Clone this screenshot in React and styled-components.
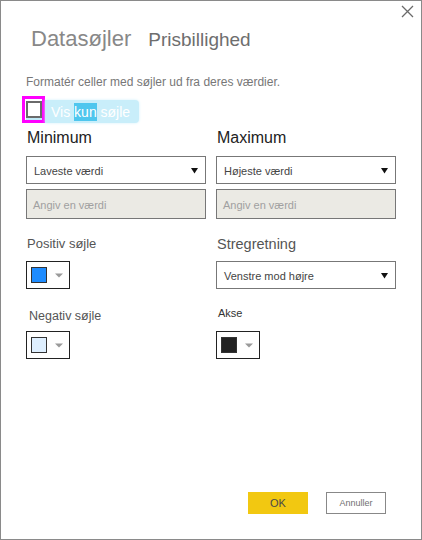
import React from 'react';
import styled, { createGlobalStyle } from 'styled-components';

const GlobalStyle = createGlobalStyle`
    body{
        margin: 0;
        background: #ffffff;
        font-family: "Liberation Sans", Arial, sans-serif;
    }
`

const Dialog = styled.div`
    position: relative;
    width: 422px;
    height: 540px;
    box-sizing: border-box;
    border: 1px solid #8a8a8a;
    padding: 0 25px 25px 25px;
    display: flex;
    flex-direction: column;
    background: #ffffff;
`

const Close = styled.button`
    position: absolute;
    top: 4px;
    right: 7px;
    width: 13px;
    height: 13px;
    padding: 0;
    border: none;
    background: transparent;
    display: flex;
    align-items: center;
    justify-content: center;
`

const Header = styled.div`
    margin-top: 25px;
    display: flex;
    align-items: baseline;
    gap: 17px;
    padding-left: 5px;

    .title{
        font-size: 22px;
        line-height: 26px;
        color: #888888;
    }

    .sub{
        font-size: 19px;
        line-height: 26px;
        color: #6e6e6e;
    }
`

const Intro = styled.p`
    margin: 21px 0 0 0;
    font-size: 12px;
    line-height: 16px;
    color: #777777;
`

const CheckRow = styled.div`
    margin-top: 6px;
    display: flex;
    align-items: flex-end;
    height: 27px;
    margin-left: -4px;
`

const Marker = styled.span`
    width: 23px;
    height: 27px;
    box-sizing: border-box;
    border: 3px solid #ff00ff;
    display: flex;
    align-items: flex-end;
    justify-content: center;
    padding-bottom: 2px;
    background: #ffffff;
`

const Box = styled.span`
    width: 16px;
    height: 17px;
    box-sizing: border-box;
    border: 2px solid #6a6a6a;
    background: #ffffff;
    box-shadow: 0 2px 0 #bfe9f7;
`

const Highlight = styled.span`
    height: 23px;
    display: flex;
    align-items: center;
    padding: 0 9px 0 6px;
    background: #c9eefa;
    border-radius: 0 4px 4px 0;
    box-shadow: 0 0 3px #d2f1fb;
    font-size: 14px;
    color: #ffffff;
    white-space: pre;

    .sel{
        background: #4ec6ee;
        padding: 1px 0;
    }
`

const Row = styled.div`
    margin-top: ${p => p.$top}px;
    display: grid;
    grid-template-columns: 180px 180px;
    column-gap: 10px;
    align-items: end;
`

const Field = styled.div`
    display: flex;
    flex-direction: column;
`

const Label = styled.span`
    font-size: ${p => p.$size}px;
    line-height: ${p => p.$lh || 16}px;
    color: ${p => p.$color || '#555555'};
    margin-bottom: ${p => p.$mb}px;
    padding-left: ${p => p.$indent || 1}px;
    white-space: nowrap;
`

const Select = styled.div`
    height: 28px;
    box-sizing: border-box;
    border: 1px solid #777777;
    display: flex;
    align-items: center;
    justify-content: space-between;
    padding: 1px 7px 0 7px;
    font-size: 11px;
    color: #444444;
    background: #ffffff;
`

const Input = styled.div`
    margin-top: 5px;
    height: 30px;
    box-sizing: border-box;
    border: 1px solid #777777;
    background: #ebeae4;
    display: flex;
    align-items: center;
    padding: 1px 6px 0 6px;
    font-size: 11px;
    color: #a0a0a0;
`

const ColorButton = styled.div`
    width: 44px;
    height: 28px;
    box-sizing: border-box;
    border: 1px solid #222222;
    display: flex;
    align-items: center;
    padding-left: 4px;
    gap: 8px;
    background: #ffffff;

    .swatch{
        width: 16px;
        height: 16px;
        box-sizing: border-box;
        border: 1px solid #333333;
        background: ${p => p.$color};
    }
`

const Footer = styled.div`
    margin-top: auto;
    display: flex;
    justify-content: flex-end;
    gap: 18px;
    padding-right: 10px;
`

const Button = styled.button`
    width: 60px;
    height: 22px;
    box-sizing: border-box;
    padding: 0;
    font-family: "Liberation Sans", Arial, sans-serif;
    font-size: ${p => p.$primary ? 11 : 9}px;
    color: ${p => p.$primary ? '#4a4a4a' : '#707070'};
    background: ${p => p.$primary ? '#f2c811' : '#ffffff'};
    border: ${p => p.$primary ? 'none' : '1px solid #888888'};
`

const Arrow = () => (
    <svg width="7" height="7" viewBox="0 0 7 7">
        <polygon points="0,1 7,1 3.5,6.5" fill="#111111" />
    </svg>
)

const SmallArrow = () => (
    <svg width="8" height="5" viewBox="0 0 8 5">
        <polygon points="0,0.5 8,0.5 4,4.5" fill="#9a9a9a" />
    </svg>
)

const Dropdown = ({text}) => (
    <Select>
        <span>{text}</span>
        <Arrow />
    </Select>
)

const Swatch = ({color}) => (
    <ColorButton $color={color}>
        <span className="swatch" />
        <SmallArrow />
    </ColorButton>
)

const App = () => {
    return(
        <>
            <GlobalStyle />
            <Dialog>
                <Close>
                    <svg width="13" height="13" viewBox="0 0 13 13">
                        <path d="M1 1 L12 12 M12 1 L1 12" stroke="#6a6a6a" strokeWidth="1.3" fill="none" />
                    </svg>
                </Close>
                <Header>
                    <span className="title">Datasøjler</span>
                    <span className="sub">Prisbillighed</span>
                </Header>
                <Intro>Formatér celler med søjler ud fra deres værdier.</Intro>
                <CheckRow>
                    <Marker><Box /></Marker>
                    <Highlight>Vis <span className="sel">kun</span> søjle</Highlight>
                </CheckRow>

                <Row $top={5}>
                    <Field>
                        <Label $size={16} $lh={20} $mb={8} $color="#222222">Minimum</Label>
                        <Dropdown text="Laveste værdi" />
                        <Input>Angiv en værdi</Input>
                    </Field>
                    <Field>
                        <Label $size={16} $lh={20} $mb={8} $color="#222222">Maximum</Label>
                        <Dropdown text="Højeste værdi" />
                        <Input>Angiv en værdi</Input>
                    </Field>
                </Row>

                <Row $top={17}>
                    <Field>
                        <Label $size={13} $mb={9}>Positiv søjle</Label>
                        <Swatch color="#1e8cff" />
                    </Field>
                    <Field>
                        <Label $size={14.5} $mb={9}>Stregretning</Label>
                        <Dropdown text="Venstre mod højre" />
                    </Field>
                </Row>

                <Row $top={16}>
                    <Field>
                        <Label $size={12.5} $mb={7} $indent={3}>Negativ søjle</Label>
                        <Swatch color="#deefff" />
                    </Field>
                    <Field>
                        <Label $size={11} $mb={10} $indent={2} $color="#333333">Akse</Label>
                        <Swatch color="#222222" />
                    </Field>
                </Row>

                <Footer>
                    <Button $primary>OK</Button>
                    <Button>Annuller</Button>
                </Footer>
            </Dialog>
        </>
    )
}

export default App;
